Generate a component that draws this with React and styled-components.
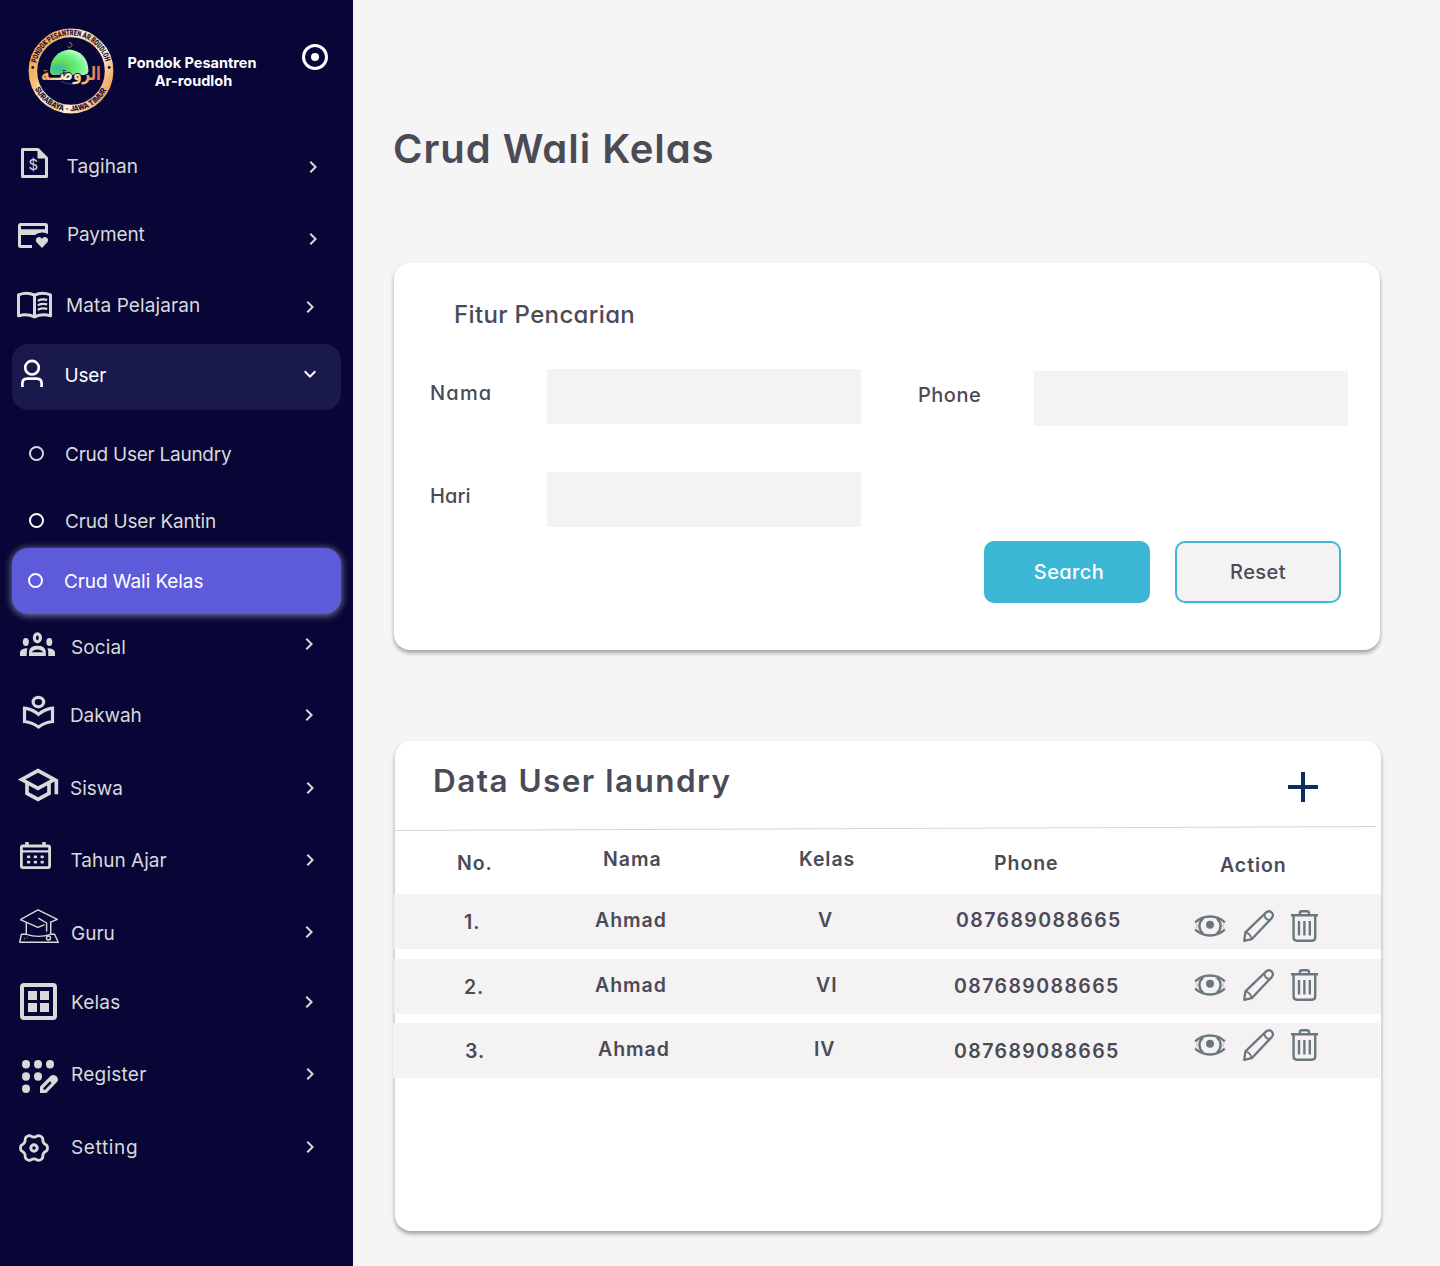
import React from "react";
import styled, { createGlobalStyle, css } from "styled-components";
import { MdChevronRight, MdExpandMore, MdOutlineSchool } from "react-icons/md";

const ink = "#4b4a57";
const pale = "#d9d9d9";
const field = "#f4f2f3";
const cyan = "#3cb7d5";
const navy = "#080636";

const GlobalStyle = createGlobalStyle`
  * { box-sizing: border-box; }
  body { margin: 0; background: #f5f5f5; }
  button, input { font: inherit; margin: 0; }
  svg { display: block; flex: none; overflow: visible; }
`;

const Page = styled.div`
  display: flex;
  width: 1440px;
  height: 1266px;
  overflow: hidden;
  background: #f5f5f5;
  color: ${ink};
  font-family: Inter, "Liberation Sans", sans-serif;
`;

/* ---------- sidebar ---------- */

const Sidebar = styled.aside`
  flex: 0 0 353px;
  padding: 0 12px;
  background: ${navy};
  color: ${pale};
`;

const Brand = styled.header`
  display: flex;
  align-items: flex-start;
  height: 130px;
  padding: 28px 0 0 16px;
`;

const BrandName = styled.div`
  display: flex;
  flex-direction: column;
  align-items: center;
  width: 150px;
  margin: 26px 0 0 3px;
  color: #fff;
  font-size: 14.5px;
  font-weight: 700;
  line-height: 18px;
  white-space: nowrap;
`;

const BrandPlace = styled.span`
  padding-left: 3px;
`;

const Toggle = styled.span`
  display: flex;
  align-items: center;
  justify-content: center;
  width: 26px;
  height: 26px;
  margin: 16px 0 0 35px;
  border: 3px solid #fff;
  border-radius: 50%;

  &::before {
    content: "";
    width: 8px;
    height: 8px;
    border-radius: 50%;
    background: #fff;
  }
`;

const NavRow = styled.a`
  display: flex;
  align-items: flex-start;
  height: ${(p) => p.$height}px;
  border-radius: 16px;
  color: ${pale};

  ${(p) =>
    p.$state === "open" &&
    css`
      background: #1a194d;
      color: #fff;
    `}
  ${(p) =>
    p.$state === "active" &&
    css`
      background: #5d5bd9;
      color: #fff;
      box-shadow: 0 1px 7px 1px rgba(255, 255, 255, 0.42);
    `}
`;

const IconSlot = styled.span`
  flex: 0 0 ${(p) => p.$width}px;
  padding: ${(p) => p.$top}px 0 0 ${(p) => p.$left}px;
`;

const NavLabel = styled.span`
  flex: 0 0 ${(p) => p.$width}px;
  margin-top: ${(p) => p.$top}px;
  font-size: 19px;
  line-height: 24px;
  letter-spacing: ${(p) => p.$spacing || 0}px;
  white-space: nowrap;
`;

const Arrow = styled.span`
  margin-top: ${(p) => p.$top}px;
`;

const Bullet = styled.span`
  display: block;
  width: 15px;
  height: 15px;
  border: 2.4px solid ${(p) => (p.$bright ? "#fff" : pale)};
  border-radius: 50%;
`;

/* ---------- main ---------- */

const Main = styled.main`
  flex: 1;
  padding: 125px 0 0 41px;
`;

const rounded = css`
  font-feature-settings: "cv11" 1;
`;

const Title = styled.h1`
  ${rounded}
  margin: 0 0 90px -1px;
  font-size: 40px;
  font-weight: 600;
  line-height: 48px;
  letter-spacing: 0.95px;
`;

const Card = styled.section`
  width: 986px;
  height: ${(p) => p.$height}px;
  margin-left: ${(p) => p.$shift || 0}px;
  border-radius: 16px;
  background: #fff;
  box-shadow: 0 3px 4px rgba(0, 0, 0, 0.34);
`;

const SearchCard = styled(Card)`
  ${rounded}
  padding: 36px 0 0 36px;
`;

const CardTitle = styled.h2`
  margin: 0 0 39px 24px;
  font-size: 24px;
  font-weight: 500;
  line-height: 31px;
  letter-spacing: 0.35px;
`;

const FormGrid = styled.div`
  display: grid;
  grid-template-columns: 488px 430px;
  row-gap: 46px;
`;

const Field = styled.label`
  display: flex;
  height: 57px;
  padding-top: ${(p) => p.$top || 0}px;
  font-size: 20px;
  font-weight: 500;
  line-height: 24px;
`;

const FieldName = styled.span`
  flex: 0 0 ${(p) => p.$width}px;
  padding-top: 12px;
  letter-spacing: ${(p) => p.$spacing}px;
`;

const Input = styled.input`
  width: 314px;
  height: 55px;
  border: 0;
  padding: 0 12px;
  background: ${field};
`;

const Buttons = styled.div`
  display: flex;
  gap: 25px;
  margin: 12px 0 0 554px;
`;

const Button = styled.button`
  width: 166px;
  height: 62px;
  padding: 0 0 0 ${(p) => (p.$primary ? 4 : 0)}px;
  border: 2px solid ${cyan};
  border-radius: 10px;
  background: ${(p) => (p.$primary ? cyan : field)};
  color: ${(p) => (p.$primary ? "#fff" : ink)};
  font-size: 20px;
  font-weight: 500;
  letter-spacing: 0.4px;
`;

const DataSection = styled(Card)`
  margin-top: 91px;
`;

const DataHead = styled.div`
  display: flex;
  justify-content: space-between;
  height: 87px;
  padding: 20px 63px 0 38px;
`;

const DataTitle = styled.h2`
  margin: 0;
  font-size: 31.5px;
  font-weight: 600;
  line-height: 40px;
  letter-spacing: 1.45px;
`;

const PlusIcon = styled.svg`
  margin-top: 11px;
`;

const Rule = styled.hr`
  width: 981px;
  height: 1px;
  margin: 0 0 2px;
  border: 0;
  background: #d6d6d6;
  transform: rotate(-0.234deg);
`;

const tableColumns = css`
  display: grid;
  grid-template-columns: 180px 210px 150px 240px 1fr;
  align-items: start;
`;

const TableHead = styled.div`
  ${tableColumns}
  height: 63px;
`;

const TableRow = styled.div`
  ${tableColumns}
  height: 55px;
  margin: 0 ${(p) => p.$shift || 0}px ${(p) => p.$gap || 0}px ${(p) => -1 - (p.$shift || 0)}px;
  padding-left: ${(p) => 1 + (p.$shift || 0)}px;
  background: ${field};
`;

const Cell = styled.span`
  padding: ${(p) => p.$top}px 0 0 ${(p) => p.$left}px;
  font-size: 19.5px;
  font-weight: 600;
  line-height: 24px;
  letter-spacing: ${(p) => (p.$numeric ? 1.42 : 0.95)}px;
  white-space: nowrap;
`;

const Actions = styled.div`
  display: flex;
  align-items: flex-start;
  padding: ${(p) => p.$top}px 0 0 20px;
  color: #6b777f;
`;

const EyeWrap = styled.span`
  margin: 5px 18px 0 0;
`;

const PencilWrap = styled.span`
  margin-right: 17px;
`;

/* ---------- drawings ---------- */

const Logo = () => (
  <svg width="86" height="86" viewBox="0 0 86 86">
    <defs>
      <linearGradient id="gold" x1="0" y1="0.2" x2="1" y2="0.8">
        <stop offset="0" stopColor="#f0a04c" />
        <stop offset="0.2" stopColor="#f5bd70" />
        <stop offset="0.38" stopColor="#f7eee0" />
        <stop offset="0.55" stopColor="#e8bd72" />
        <stop offset="0.68" stopColor="#fff4df" />
        <stop offset="1" stopColor="#ef9c50" />
      </linearGradient>
      <radialGradient id="dome" cx="0.22" cy="0.75" r="0.85">
        <stop offset="0" stopColor="#36b5b0" />
        <stop offset="0.35" stopColor="#62dc5c" />
        <stop offset="0.62" stopColor="#66f087" />
        <stop offset="1" stopColor="#c5ffc5" />
      </radialGradient>
      <linearGradient id="script" x1="0" x2="1">
        <stop offset="0" stopColor="#f5a04e" />
        <stop offset="0.45" stopColor="#fff3dc" />
        <stop offset="0.75" stopColor="#f3b066" />
        <stop offset="1" stopColor="#d2655c" />
      </linearGradient>
      <path id="ringTop" d="M8.3 35A35.6 35.6 0 0 1 77.7 35" />
      <path id="ringBottom" d="M5.6 58A40.3 40.3 0 0 0 80.4 58" />
    </defs>
    <circle cx="43" cy="43" r="38.1" fill="none" stroke="url(#gold)" strokeWidth="8.6" />
    <g fill="#17123d" fontFamily="Roboto, sans-serif" fontWeight="900" fontSize="7.8">
      <text>
        <textPath href="#ringTop" textLength="94" lengthAdjust="spacingAndGlyphs">PONDOK PESANTREN AR ROUDLOH</textPath>
      </text>
      <text>
        <textPath href="#ringBottom" startOffset="3" textLength="88" lengthAdjust="spacingAndGlyphs">SURABAYA - JAWA TIMUR</textPath>
      </text>
    </g>
    <circle cx="4.8" cy="39.5" r="1.4" fill="#17123d" />
    <circle cx="81.2" cy="39.5" r="1.4" fill="#17123d" />
    <path d="M22 43C22 30 31 22.5 41.5 21.5C52 22.5 60.5 30 60.5 43Q60 46 57 47H25Q22 46 22 43Z" fill="url(#dome)" />
    <path d="M41 14.5a2.5 2.5 0 1 1-1.5 4" fill="none" stroke="#b86a55" strokeWidth="1" />
    <path d="M33 53Q41 58 52 54" fill="none" stroke="#3a3d58" strokeWidth="1.2" />
    <text
      x="13"
      y="52"
      fontFamily="DejaVu Sans, sans-serif"
      fontWeight="700"
      fontSize="19"
      textLength="60"
      lengthAdjust="spacingAndGlyphs"
      fill="url(#script)"
      stroke={navy}
      strokeWidth="1.8"
      paintOrder="stroke"
    >
      الروضــة
    </text>
  </svg>
);

const InvoiceIcon = () => (
  <svg width="27" height="30" viewBox="0 0 27 30">
    <path d="M1.5 1.5H17L25.5 10V28.5H1.5Z" fill="none" stroke="currentColor" strokeWidth="3" strokeLinejoin="round" />
    <path d="M16.5 1V10.5H26.5Z" fill="currentColor" />
    <text x="12.4" y="21.5" textAnchor="middle" fontFamily="Inter, sans-serif" fontSize="15" fill="currentColor">$</text>
  </svg>
);

const PaymentIcon = () => (
  <svg width="31" height="25" viewBox="0 0 31 25" fill="currentColor">
    <path
      fillRule="evenodd"
      d="M2.5 0H27.5A2.5 2.5 0 0 1 30 2.5V11Q27 9.2 24 9.5Q19.5 9.5 17 12H3V22H14V25H2.5A2.5 2.5 0 0 1 0 22.5V2.5A2.5 2.5 0 0 1 2.5 0ZM3 3V6.2H27V3Z"
    />
    <path d="M24 25L18.8 19.5C16.5 17 19 13.5 22 14.2Q23.3 14.5 24 16Q24.7 14.5 26 14.2C29 13.5 31.5 17 29.2 19.5Z" />
  </svg>
);

const BookIcon = () => (
  <svg width="35" height="27" viewBox="0 0 35 27" fill="none" stroke="currentColor" strokeWidth="3" strokeLinejoin="round">
    <path d="M1.5 2.9Q10 -0.3 17.5 3.1Q25 -0.3 33.5 2.9V23.8Q25 21 17.5 24.9Q10 21 1.5 23.8ZM17.5 3V24.5" />
    <path d="M20.8 8.7Q25 6.6 30.2 7.8M20.8 13.2Q25 11.1 30.2 12.3M20.8 17.7Q25 15.6 30.2 16.8" strokeWidth="2.3" />
  </svg>
);

const UserIcon = () => (
  <svg width="22" height="27" viewBox="0 0 22 27" fill="none" stroke="currentColor" strokeWidth="2.7">
    <circle cx="11" cy="7.7" r="6.8" />
    <path d="M1.4 27V23.5Q1.4 18.7 6.2 18.7H15.8Q20.6 18.7 20.6 23.5V27" />
  </svg>
);

const SocialIcon = () => (
  <svg width="35" height="24" viewBox="0 0 35 24" fill="currentColor">
    <ellipse cx="17.4" cy="5.8" rx="3" ry="4" fill="none" stroke="currentColor" strokeWidth="3.2" />
    <ellipse cx="5.8" cy="10" rx="3" ry="4" />
    <ellipse cx="29.3" cy="10" rx="3" ry="4" />
    <path d="M0 24V20Q1 16.2 7.5 16.2Q6.7 18 6.7 24Z" />
    <path d="M35 24V20Q34 16.2 27.5 16.2Q28.3 18 28.3 24Z" />
    <path fillRule="evenodd" d="M9 24V19.5Q9.5 13.8 17.4 13.8Q25.3 13.8 25.8 19.5V24ZM12 20.2H23Q21.5 17.5 17.4 17.5Q13.3 17.5 12 20.2Z" />
  </svg>
);

const ReaderIcon = () => (
  <svg width="31" height="33" viewBox="0 0 31 33" fill="none" stroke="currentColor" strokeWidth="3.2">
    <ellipse cx="15.4" cy="6.1" rx="5.3" ry="4.7" />
    <path d="M1.5 12.2Q9.5 13.2 15.5 18.4Q21.5 13.2 29.5 12.2V25.5Q21.5 26.5 15.5 31Q9.5 26.5 1.5 25.5Z" />
  </svg>
);

const CalendarIcon = () => (
  <svg width="31" height="27" viewBox="0 0 31 27" fill="currentColor">
    <rect x="1.4" y="4" width="28.2" height="21.6" rx="1.5" fill="none" stroke="currentColor" strokeWidth="2.8" />
    <path d="M5.2 0H8.7V4H5.2ZM22.3 0H25.8V4H22.3ZM2 8.2H29V10.6H2Z" />
    {[8.6, 15.4, 22.2].map((x) =>
      [14.8, 20.2].map((y) => (
        <rect key={`${x}-${y}`} x={x - 1.7} y={y - 1.4} width="3.4" height="2.8" rx="1" />
      ))
    )}
  </svg>
);

const TeacherIcon = () => (
  <svg width="40" height="34" viewBox="0 0 40 34" fill="none" stroke="currentColor" strokeWidth="1.4" strokeLinejoin="round">
    <path d="M1.3 10.6L19 0.8L38.3 10.4L31.7 13.2M1.3 10.6L19 18.3L25.5 15.7" />
    <path d="M7.3 13.3V25.3Q19.5 29.5 31.7 25.3V12.7" />
    <path d="M19.3 9.2L27.6 14V22.5" />
    <path d="M7.3 25.2H2.5L0.7 33.2H39.3L35.5 25.2H31.7" />
    <circle cx="29.5" cy="29" r="2" />
    <path d="M5.5 28.5V31M8.5 27.5L7.5 30" strokeWidth="0.7" opacity="0.5" />
  </svg>
);

const ClassIcon = () => (
  <svg width="37" height="37" viewBox="0 0 37 37" fill="currentColor">
    <rect x="2" y="2" width="33" height="33" rx="2" fill="none" stroke="currentColor" strokeWidth="4" />
    <path d="M8 8H17V17H8ZM20 8H29V17H20ZM8 20H17V29H8ZM20 20H29V29H20Z" />
  </svg>
);

const RegisterIcon = () => (
  <svg width="36" height="33" viewBox="0 0 36 33" fill="currentColor">
    {[[4, 4.2], [16, 4.2], [28, 4.2], [4, 16.5], [16, 16.5], [4, 28.8]].map(([x, y]) => (
      <ellipse key={`${x}-${y}`} cx={x} cy={y} rx="4" ry="4.2" />
    ))}
    <path d="M18 33V26.5L28.5 16Q31.3 13.7 34.3 16.3Q37.3 19.5 35 22L24.3 33Z" />
    <path d="M21.8 29.3L28.8 22.2" stroke={navy} strokeWidth="2.4" />
  </svg>
);

const gearOutline =
  Array.from({ length: 121 }, (_, i) => {
    const a = (i / 120) * Math.PI * 2;
    const r = 12.3 + 1.35 * Math.cos(6 * a) - 0.12 * Math.cos(12 * a) - 0.12 * Math.cos(18 * a);
    return `${i ? "L" : "M"}${(15 + r * Math.cos(a)).toFixed(2)} ${(15 + r * Math.sin(a)).toFixed(2)}`;
  }).join("") + "Z";

const GearIcon = () => (
  <svg width="30" height="30" viewBox="0 0 30 30" fill="none" stroke="currentColor">
    <path d={gearOutline} strokeWidth="2.8" />
    <circle cx="15" cy="15" r="3.2" strokeWidth="3" />
  </svg>
);

const EyeIcon = () => (
  <svg width="30" height="22" viewBox="0 0 30 22" fill="none" stroke="currentColor">
    <path d="M0.2 7.4Q6.5 1.6 15 1.6T29.8 7.4M0.2 14.6Q6.5 20.4 15 20.4T29.8 14.6" strokeWidth="2.5" />
    <path d="M8 3.3Q4.4 6.8 4.4 11T8 18.7M22 3.3Q25.6 6.8 25.6 11T22 18.7" strokeWidth="2.4" />
    <path d="M0.4 8.4Q1.6 9.4 2.4 11Q1.6 12.6 0.4 13.6M29.6 8.4Q28.4 9.4 27.6 11Q28.4 12.6 29.6 13.6" strokeWidth="0.8" opacity="0.6" />
    <circle cx="15" cy="9.7" r="4" fill="currentColor" stroke="none" />
  </svg>
);

const PencilIcon = () => (
  <svg width="31" height="32" viewBox="0 0 31 32" fill="none" stroke="currentColor" strokeWidth="2.3" strokeLinejoin="round">
    <path d="M1.2 30.8L2.4 22.3L23.2 2.4Q26 0 28.7 2.5Q31.2 5.3 28.7 8.1L8.7 29.2Z" />
    <path d="M2.4 22.3Q7.5 23.5 8.7 29.2M21.3 4.3Q21.8 9.5 26.9 10.1" strokeWidth="1.9" />
  </svg>
);

const TrashIcon = () => (
  <svg width="27" height="32" viewBox="0 0 27 32" fill="none" stroke="currentColor" strokeWidth="2.4">
    <path d="M0 5.2H27M8.8 5V3.2Q8.8 1.2 10.8 1.2H16Q18 1.2 18 3.2V5" />
    <path d="M2.6 5V27.5Q2.6 30.7 5.8 30.7H21Q24.2 30.7 24.2 27.5V5" />
    <path d="M8 11V25.5M13.4 11V25.5M18.8 11V25.5" />
  </svg>
);

/* ---------- content ---------- */

// icon: [left, top], label: [left, top, letter spacing], arrow: [left, top]; all inside the row
const menu = [
  { text: "Tagihan", height: 70, Icon: InvoiceIcon, icon: [9, 18], label: [54.5, 25, 0.1], arrow: [289, 25] },
  { text: "Payment", height: 70, Icon: PaymentIcon, icon: [6, 23], label: [55, 23, -0.1], arrow: [289, 27] },
  { text: "Mata Pelajaran", height: 74, Icon: BookIcon, icon: [5, 22], label: [54, 24, 0.1], arrow: [286, 25] },
  { text: "User", height: 66, Icon: UserIcon, icon: [9, 16], label: [52.5, 20, -0.2], arrow: [286, 18], state: "open" },
  { text: "Crud User Laundry", height: 77, icon: [17, 36], label: [53, 33, -0.25] },
  { text: "Crud User Kantin", height: 61, icon: [17, 26], label: [53, 23, -0.16], bright: true },
  { text: "Crud Wali Kelas", height: 66, icon: [16, 25], label: [52, 22, -0.08], bright: true, state: "active" },
  { text: "Social", height: 67, Icon: SocialIcon, icon: [8, 18], label: [59, 22, 0.1], arrow: [285, 18] },
  { text: "Dakwah", height: 71, Icon: ReaderIcon, icon: [11, 15], label: [58, 23, -0.1], arrow: [285, 22] },
  { text: "Siswa", height: 73, Icon: MdOutlineSchool, size: 44, icon: [3.7, 11], label: [58, 25], arrow: [286, 24] },
  { text: "Tahun Ajar", height: 72, Icon: CalendarIcon, icon: [8, 17], label: [58.5, 24], arrow: [286, 23] },
  { text: "Guru", height: 70, Icon: TeacherIcon, icon: [7, 12], label: [59, 25], arrow: [285, 23] },
  { text: "Kelas", height: 71, Icon: ClassIcon, icon: [8, 16], label: [59, 24, 0.2], arrow: [285, 23] },
  { text: "Register", height: 73, Icon: RegisterIcon, icon: [10, 22], label: [59, 25, 0.25], arrow: [286, 24] },
  { text: "Setting", height: 72, Icon: GearIcon, icon: [7, 22], label: [59, 25, 0.65], arrow: [286, 24] },
];

// every cell: [text, left, top]
const heads = [
  ["No.", 62, 20],
  ["Nama", 28, 16],
  ["Kelas", 14, 16],
  ["Phone", 59, 20],
  ["Action", 45, 22],
];

const rows = [
  { gap: 10, cells: [["1.", 69, 16], ["Ahmad", 20, 14], ["V", 33, 14], ["087689088665", 21, 14]], actions: 16 },
  { gap: 9, cells: [["2.", 69, 16], ["Ahmad", 20, 14], ["VI", 31, 14], ["087689088665", 19, 15]], actions: 10 },
  { shift: 1, cells: [["3.", 70, 16], ["Ahmad", 23, 14], ["IV", 29, 14], ["087689088665", 19, 16]], actions: 6 },
];

const NavItem = ({ item }) => {
  const { Icon, icon, label, arrow, state } = item;
  const Chevron = state === "open" ? MdExpandMore : MdChevronRight;
  return (
    <NavRow $height={item.height} $state={state}>
      <IconSlot $width={label[0]} $left={icon[0]} $top={icon[1]}>
        {Icon ? <Icon size={item.size} /> : <Bullet $bright={item.bright} />}
      </IconSlot>
      <NavLabel $width={(arrow ? arrow[0] : 286) - label[0]} $top={label[1]} $spacing={label[2]}>
        {item.text}
      </NavLabel>
      {arrow && (
        <Arrow $top={arrow[1]}>
          <Chevron size={24} />
        </Arrow>
      )}
    </NavRow>
  );
};

const SearchPanel = () => (
  <SearchCard $height={387}>
    <CardTitle>Fitur Pencarian</CardTitle>
    <FormGrid>
      <Field>
        <FieldName $width={117} $spacing={1.2}>Nama</FieldName>
        <Input />
      </Field>
      <Field $top={2}>
        <FieldName $width={116} $spacing={0.5}>Phone</FieldName>
        <Input />
      </Field>
      <Field>
        <FieldName $width={117} $spacing={0.1}>Hari</FieldName>
        <Input />
      </Field>
    </FormGrid>
    <Buttons>
      <Button $primary>Search</Button>
      <Button>Reset</Button>
    </Buttons>
  </SearchCard>
);

const DataPanel = () => (
  <DataSection $height={490} $shift={1}>
    <DataHead>
      <DataTitle>Data User laundry</DataTitle>
      <PlusIcon width="30" height="30" viewBox="0 0 30 30">
        <path d="M15 0V30M0 15H30" stroke="#0d2c62" strokeWidth="4" />
      </PlusIcon>
    </DataHead>
    <Rule />
    <TableHead>
      {heads.map(([text, left, top]) => (
        <Cell key={text} $left={left} $top={top}>
          {text}
        </Cell>
      ))}
    </TableHead>
    {rows.map((row, i) => (
      <TableRow key={i} $gap={row.gap} $shift={row.shift}>
        {row.cells.map(([text, left, top], c) => (
          <Cell key={c} $left={left} $top={top} $numeric={c === 3}>
            {text}
          </Cell>
        ))}
        <Actions $top={row.actions}>
          <EyeWrap>
            <EyeIcon />
          </EyeWrap>
          <PencilWrap>
            <PencilIcon />
          </PencilWrap>
          <TrashIcon />
        </Actions>
      </TableRow>
    ))}
  </DataSection>
);

export default function App() {
  return (
    <Page>
      <GlobalStyle />
      <Sidebar>
        <Brand>
          <Logo />
          <BrandName>
            <span>Pondok Pesantren</span>
            <BrandPlace>Ar-roudloh</BrandPlace>
          </BrandName>
          <Toggle />
        </Brand>
        <nav>
          {menu.map((item) => (
            <NavItem key={item.text} item={item} />
          ))}
        </nav>
      </Sidebar>

      <Main>
        <Title>Crud Wali Kelas</Title>
        <SearchPanel />
        <DataPanel />
      </Main>
    </Page>
  );
}
